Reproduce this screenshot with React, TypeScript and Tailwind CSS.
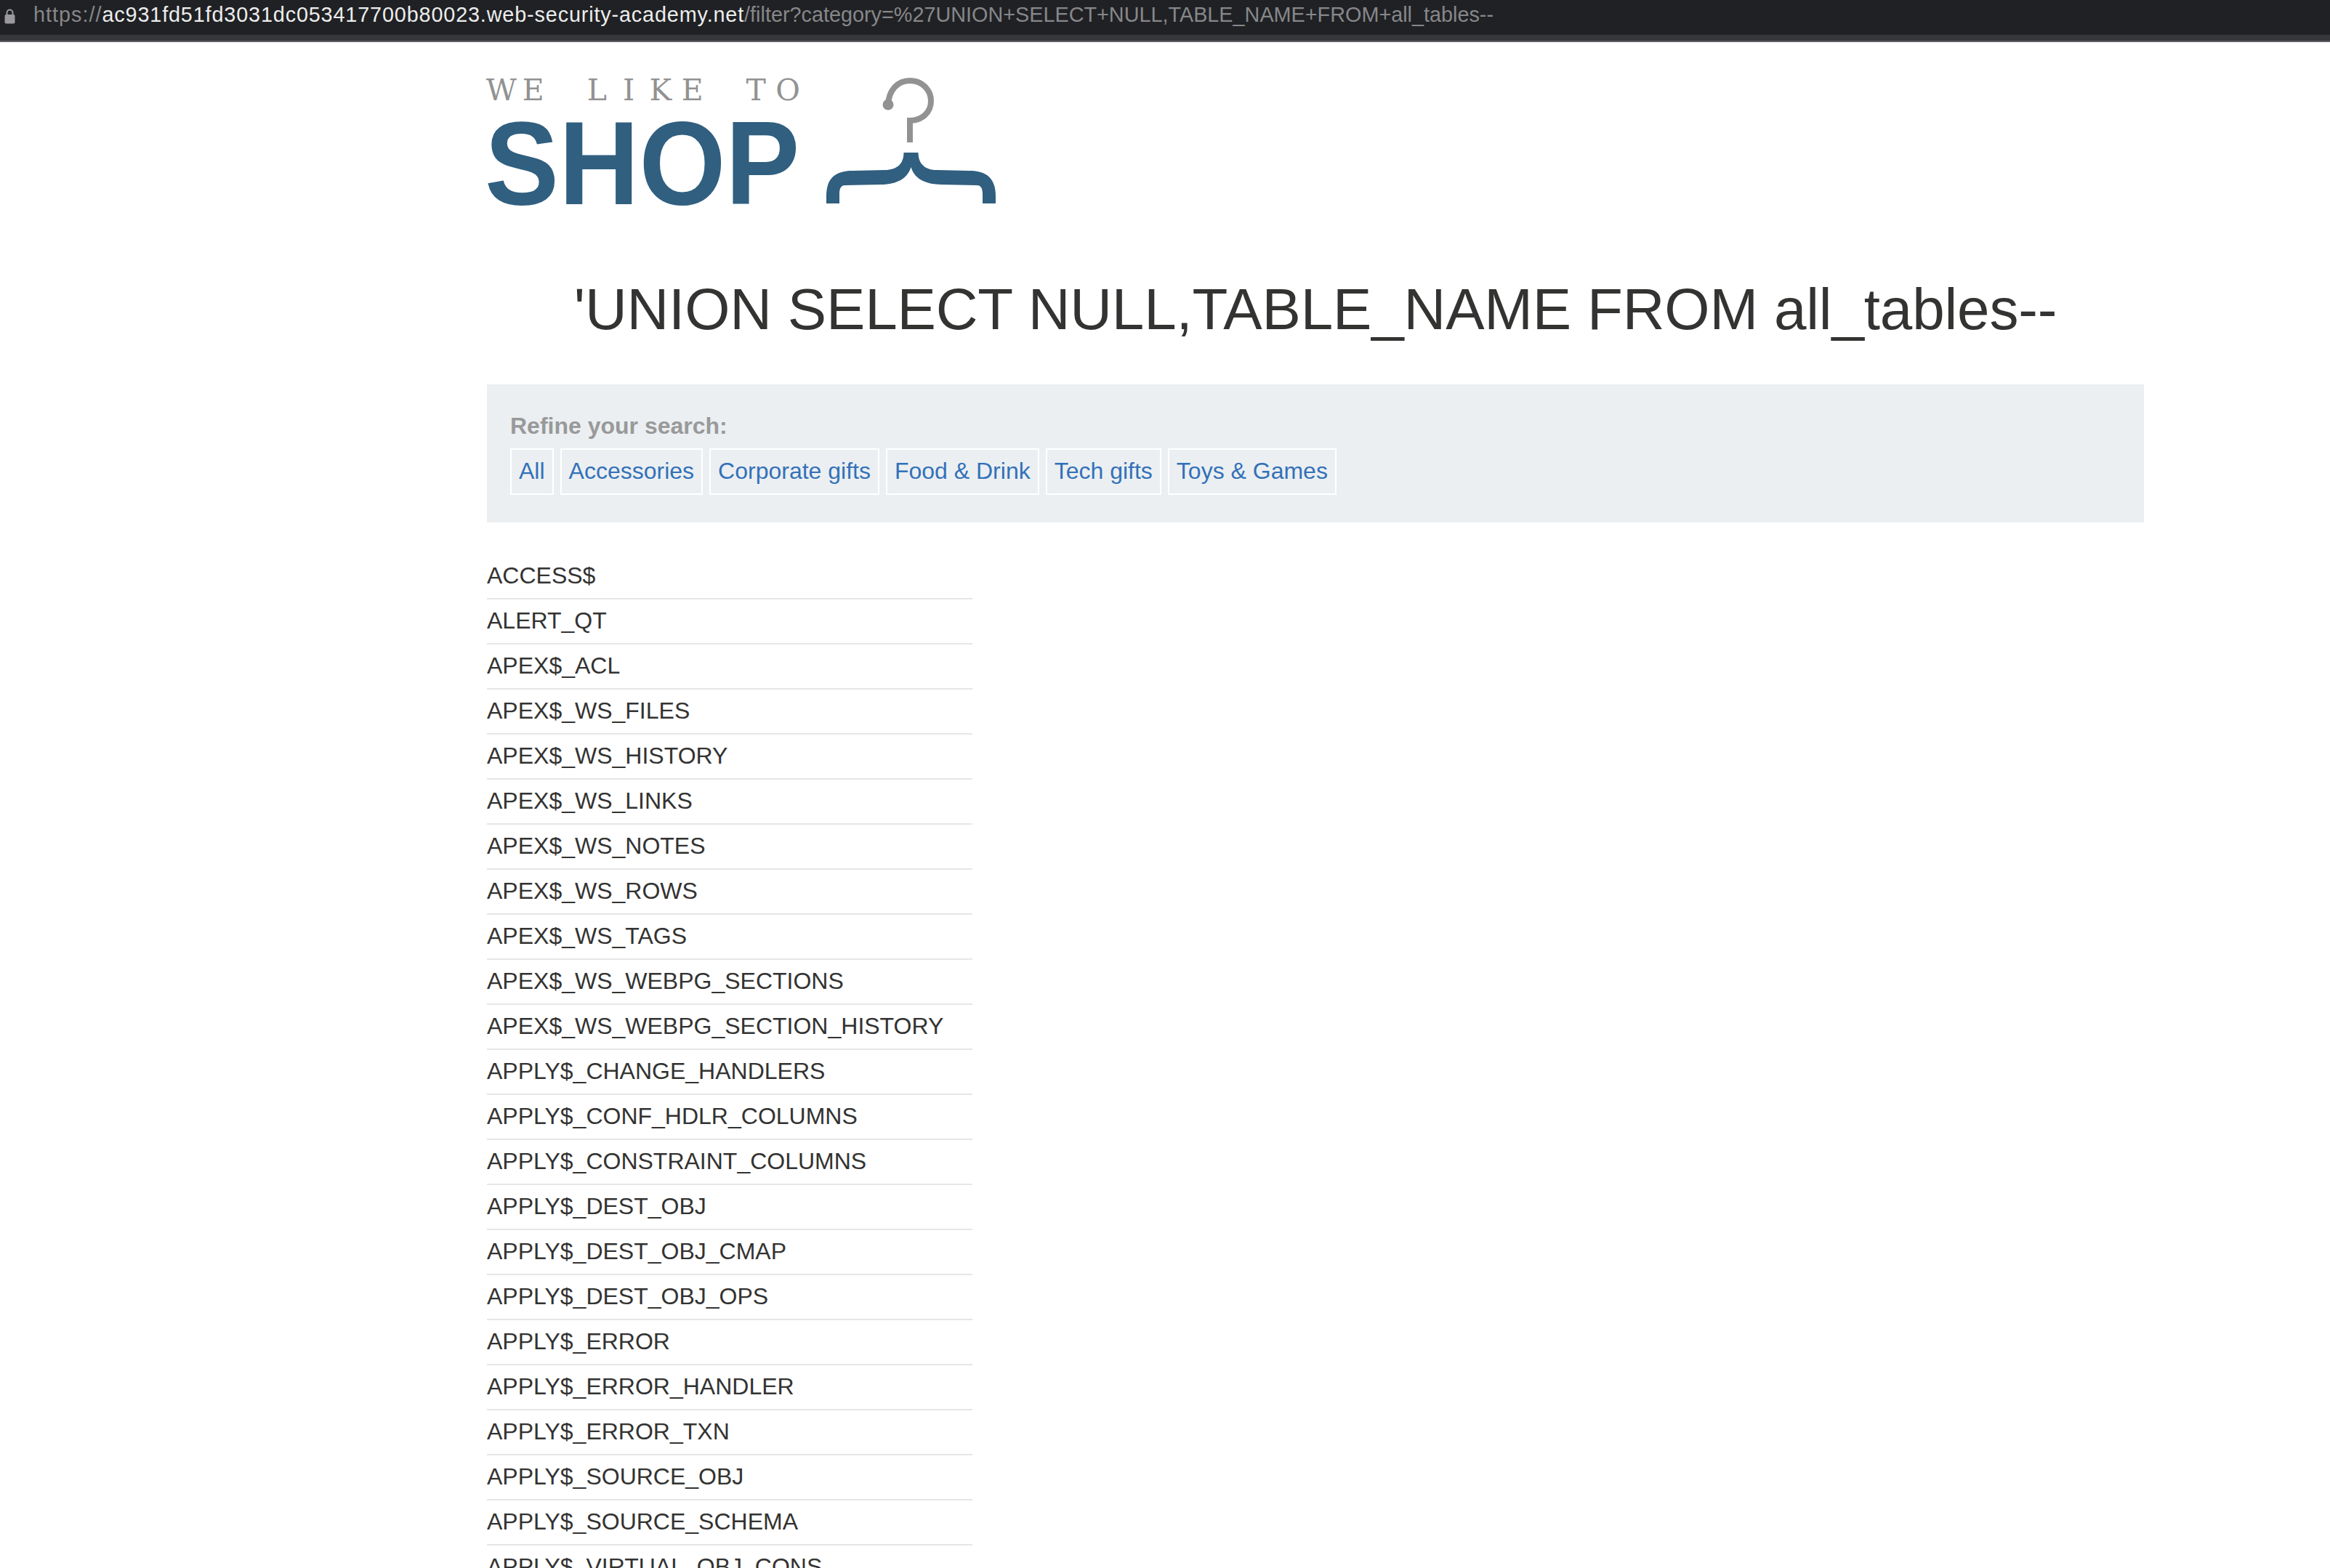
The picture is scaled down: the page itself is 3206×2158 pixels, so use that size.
const filters = ['All', 'Accessories', 'Corporate gifts', 'Food & Drink', 'Tech gifts', 'Toys & Games'];

const tables = [
  'ACCESS$',
  'ALERT_QT',
  'APEX$_ACL',
  'APEX$_WS_FILES',
  'APEX$_WS_HISTORY',
  'APEX$_WS_LINKS',
  'APEX$_WS_NOTES',
  'APEX$_WS_ROWS',
  'APEX$_WS_TAGS',
  'APEX$_WS_WEBPG_SECTIONS',
  'APEX$_WS_WEBPG_SECTION_HISTORY',
  'APPLY$_CHANGE_HANDLERS',
  'APPLY$_CONF_HDLR_COLUMNS',
  'APPLY$_CONSTRAINT_COLUMNS',
  'APPLY$_DEST_OBJ',
  'APPLY$_DEST_OBJ_CMAP',
  'APPLY$_DEST_OBJ_OPS',
  'APPLY$_ERROR',
  'APPLY$_ERROR_HANDLER',
  'APPLY$_ERROR_TXN',
  'APPLY$_SOURCE_OBJ',
  'APPLY$_SOURCE_SCHEMA',
  'APPLY$_VIRTUAL_OBJ_CONS',
];

function AddressBar() {
  return (
    <div className="shrink-0">
      <div className="flex h-12 items-center bg-[#202124] pl-[6px]">
        <svg width="15" height="22" viewBox="0 0 15 22" className="mr-[25px] mb-[4px] shrink-0">
          <path d="M3.5 10V6.5a4 4 0 0 1 8 0V10" fill="none" stroke="#9a9a9c" strokeWidth="2" />
          <rect x="0.5" y="9" width="14" height="12.5" rx="2" fill="#9a9a9c" />
        </svg>
        <div className="pb-[6px] text-[28.8px] whitespace-nowrap text-[#86878a]">
          <span className="tracking-[1px]">https://</span>
          <span className="tracking-[0.85px] text-[#eceded]">ac931fd51fd3031dc053417700b80023.web-security-academy.net</span>
          /filter?category=%27UNION+SELECT+NULL,TABLE_NAME+FROM+all_tables--
        </div>
      </div>
      <div className="h-2 bg-[#36373b]" />
      <div className="h-[2px] bg-[#5f6063]" />
    </div>
  );
}

function Logo() {
  return (
    <div className="flex h-[190px] items-start">
      <div className="w-[460px] pt-[2px]">
        {/* slab letters on an even pitch, the logo's typewriter line */}
        <div className="-ml-[2px] flex h-[44px] font-['DejaVu_Serif',serif] text-[41px] leading-[44px] text-[#929292]">
          {'WE LIKE TO'.split('').map((letter, index) => (
            <span key={index} className="w-[43.8px] shrink-0 text-center whitespace-pre">
              {letter}
            </span>
          ))}
        </div>
        <div className="mt-[4px] -ml-[3px] origin-left scale-x-[0.938] text-[163px] leading-[150px] font-bold text-[#305f80]">
          SHOP
        </div>
      </div>
      <svg width="250" height="190" viewBox="0 0 250 190" className="shrink-0">
        <path
          d="M92 44C93 24 105 11 122 11C139 11 151 24 151 39C151 55 138 66 122 66V96"
          fill="none"
          stroke="#929292"
          strokeWidth="8"
        />
        <ellipse cx="92" cy="44" rx="7.5" ry="7.5" fill="#929292" />
        <path
          d="M113.5 110C113.5 125 105 134 87 134L43 135C20 135 7 145 7 170V180H25V167C25 158 28 155 33 155L82 154C105 154 119 145 123.5 130C128 145 142 154 165 154L214 155C219 155 222 158 222 167V180H240V170C240 145 227 135 204 135L160 134C142 134 133.5 125 133.5 110Z"
          fill="#305f80"
        />
      </svg>
    </div>
  );
}

export default function App() {
  return (
    <div className="flex h-[2158px] flex-col overflow-hidden bg-white font-['Liberation_Sans',Arial,sans-serif] text-[32px] text-[#333332]">
      <AddressBar />
      <main className="ml-[670px] w-[2280px] pt-[42px]">
        <Logo />
        <h1 className="mt-[81px] text-center text-[80px] leading-[110px] font-normal tracking-[-0.17px]">
          'UNION SELECT NULL,TABLE_NAME FROM all_tables--
        </h1>
        <section className="mt-[48px] h-[190px] bg-[#ebeff2] px-[32px] pt-[35px]">
          <div className="text-[32px] leading-[44px] font-bold text-[#999999]">Refine your search:</div>
          <div className="mt-[9px] flex gap-[9px]">
            {filters.map((name) => (
              <a
                key={name}
                className="flex h-[64px] items-center border-2 border-white px-[10px] pb-[2px] whitespace-nowrap text-[#3371b8]"
              >
                {name}
              </a>
            ))}
          </div>
        </section>
        <table className="mt-[43px] w-[668px] border-collapse">
          <tbody>
            {tables.map((name) => (
              <tr key={name} className="h-[62px] border-b-2 border-[#e6e6e6]">
                <td className="pb-[2px] leading-[40px]">{name}</td>
              </tr>
            ))}
          </tbody>
        </table>
      </main>
    </div>
  );
}
